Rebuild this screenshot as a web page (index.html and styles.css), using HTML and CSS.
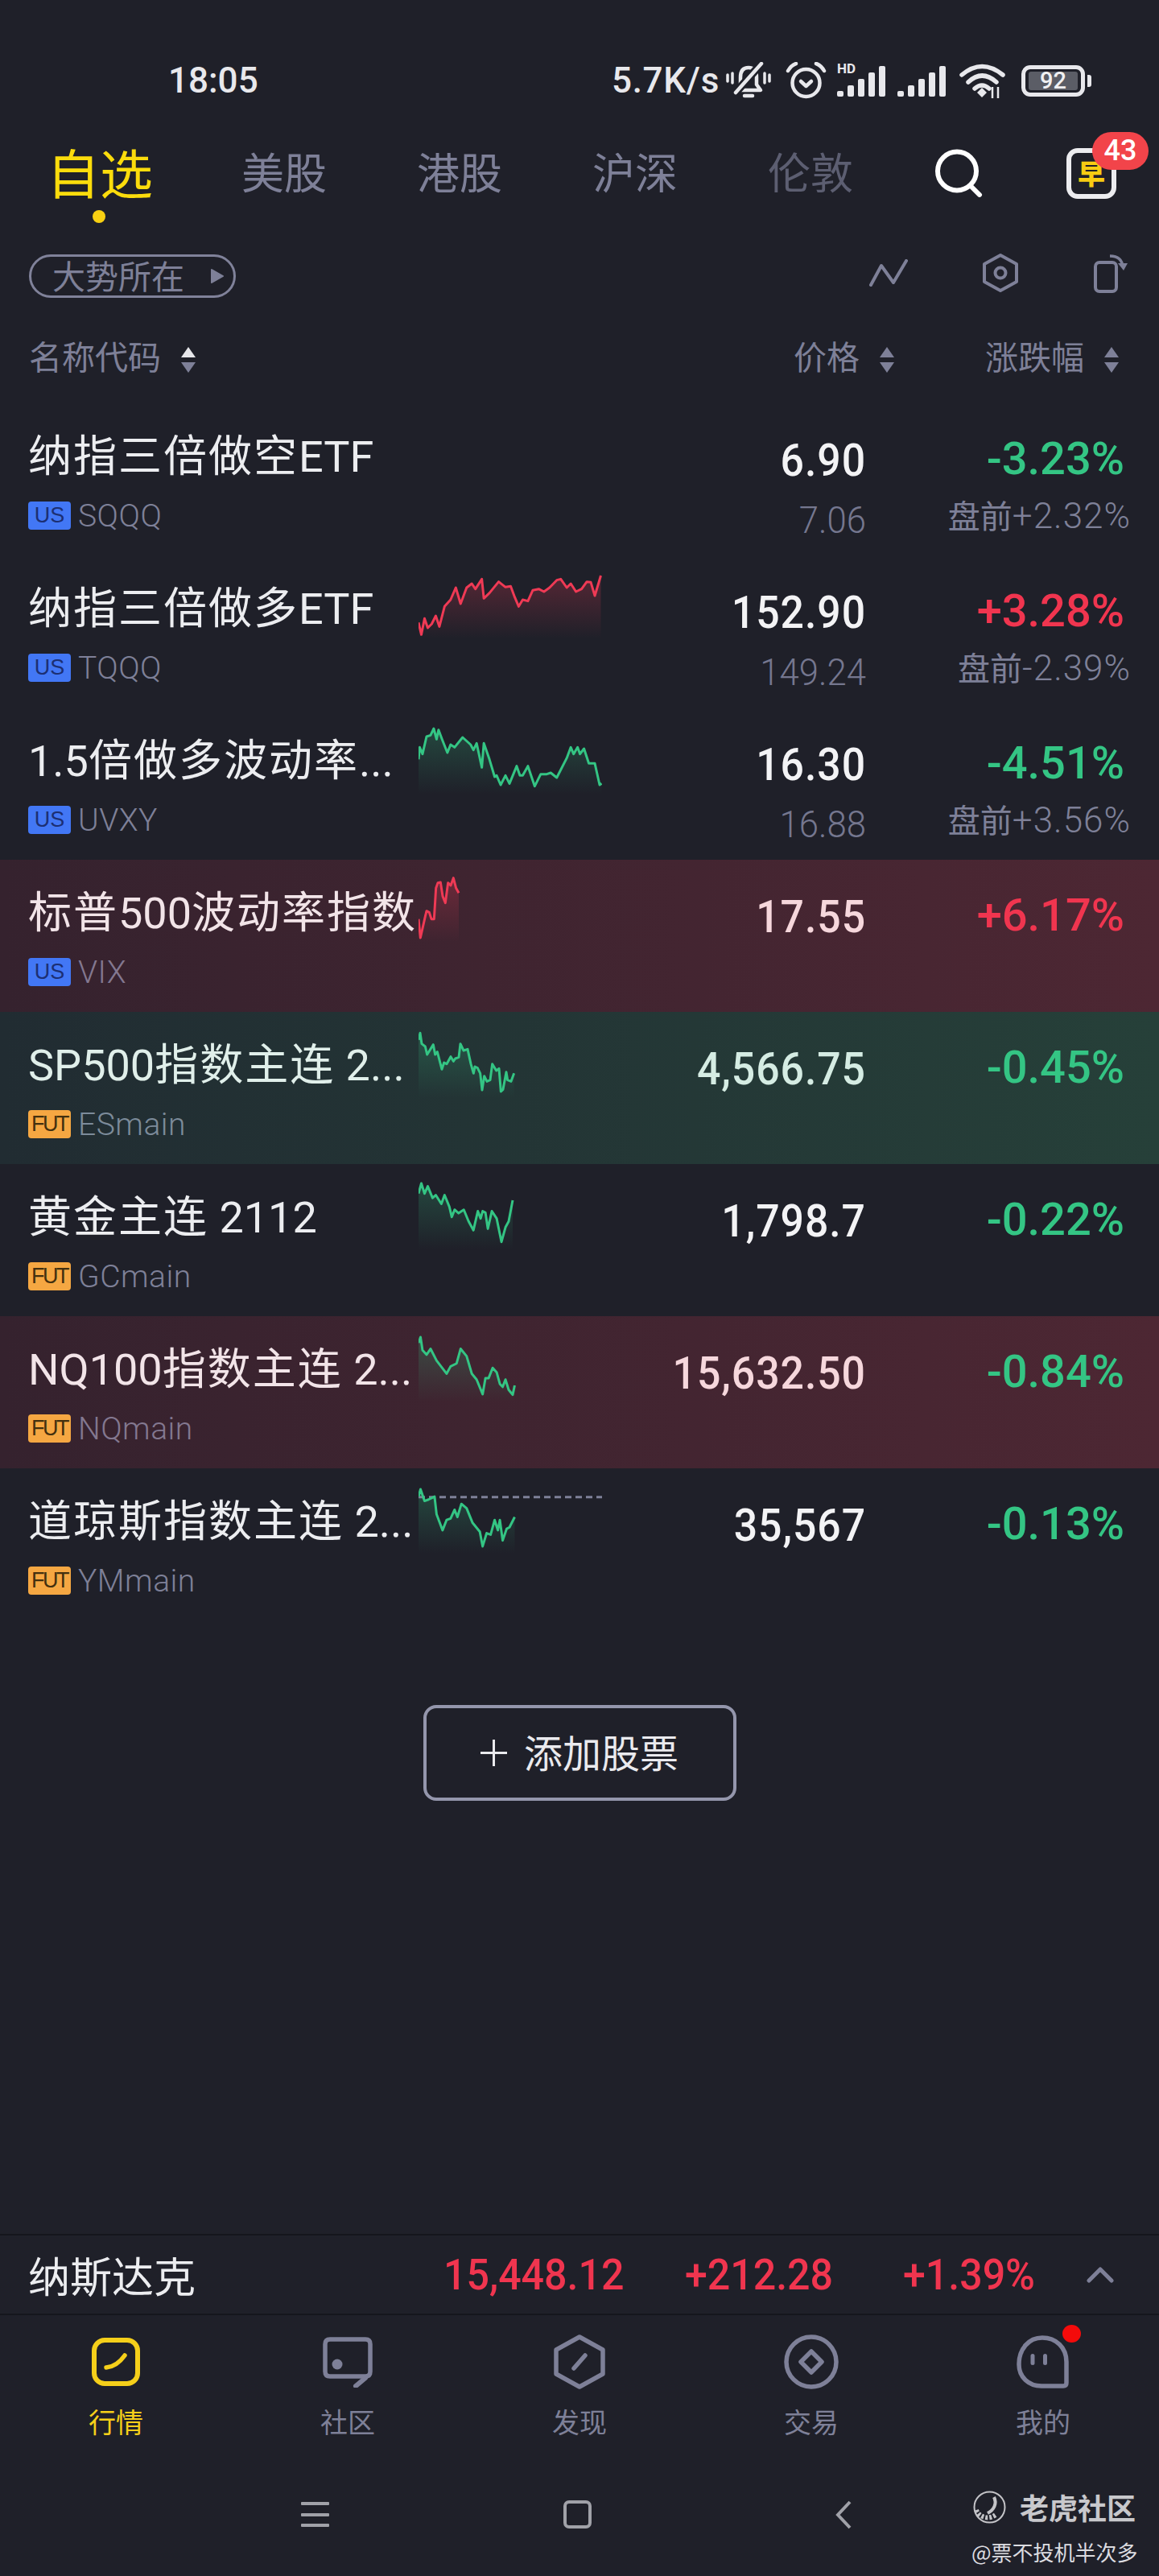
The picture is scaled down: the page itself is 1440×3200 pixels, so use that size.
FILE: index.html
```html
<!DOCTYPE html>
<html lang="zh-CN">
<head>
<meta charset="utf-8">
<title>自选</title>
<link rel="stylesheet" href="styles.css">
</head>
<body>
<div class="page">

  <header class="status">
    <span class="time">18:05</span>
    <div class="status-right">
      <span class="speed">5.7K/s</span>
      <svg class="ic-bell" width="56" height="46" viewBox="0 0 56 46"><g fill="none" stroke="#e8e8ec" stroke-width="4.500" stroke-linecap="round" stroke-linejoin="round"><path d="M13 35 L18 29 V19 Q18 7 28 7 Q38 7 38 19 V28 L43 35 Z"/><path d="M23 42 H33"/><path d="M12 38 L44 2" stroke="#1f2029" stroke-width="10"/><path d="M12 38 L44 2"/><path d="M8 14 V26 M2 16 V24 M48 14 V26 M54 16 V24" stroke-width="3.500"/></g></svg>
      <svg class="ic-alarm" width="51" height="46" viewBox="0 0 51 46"><g fill="none" stroke="#e8e8ec" stroke-width="4.500" stroke-linecap="round" stroke-linejoin="round"><circle cx="25.500" cy="26" r="17"/><path d="M19 24 L25.500 30 L32 24"/><path d="M3 11 Q7 4 13 2 M48 11 Q44 4 38 2"/></g></svg>
      <div class="ic-signal ic-hd"><span class="hd">HD</span><i class="b1"></i><i class="b2"></i><i class="b3"></i><i class="b4"></i><i class="b5"></i></div>
      <div class="ic-signal ic-sig2"><i class="b1"></i><i class="b2"></i><i class="b3"></i><i class="b4"></i><i class="b5"></i></div>
      <svg class="ic-wifi" width="58" height="44" viewBox="0 0 58 44"><g fill="none" stroke="#e8e8ec" stroke-width="5.500" stroke-linecap="round"><path d="M3 15 Q28 -6 54 15"/><path d="M11 24 Q28 8 46 24"/><path d="M19 32 Q28 24 37 32" /></g><path d="M22 37 L28 31 L34 37 L28 43 Z" fill="#e8e8ec"/><path d="M41 30 V44 M48 30 V44" stroke="#e8e8ec" stroke-width="2.500"/></svg>
      <div class="battery"><div class="batt-body"><span class="batt-fill">92</span></div><i class="batt-cap"></i></div>
    </div>
  </header>

  <nav class="tabs">
    <a class="tab tab-on">自选<i class="tab-dot"></i></a>
    <a class="tab">美股</a>
    <a class="tab">港股</a>
    <a class="tab">沪深</a>
    <a class="tab tab-fade">伦敦</a>
    <div class="tools">
      <svg width="60" height="60" viewBox="0 0 60 60"><circle cx="28" cy="27.500" r="24" fill="none" stroke="#fff" stroke-width="6"/><path d="M45 46 L56 57" stroke="#fff" stroke-width="6" stroke-linecap="round"/></svg>
      <div class="early"><span class="early-ch">早</span><span class="early-badge">43</span></div>
    </div>
  </nav>

  <div class="market">
    <div class="pill"><span class="pill-text">大势所在</span><svg width="18" height="20" viewBox="0 0 18 20"><path d="M2 2 L16 10 L2 18 Z" fill="#7e8098" stroke="#7e8098" stroke-width="2" stroke-linejoin="round"/></svg></div>
    <div class="market-tools">
      <svg width="48" height="34" viewBox="0 0 48 34"><path d="M2 32 L15 8 L30 29 L46 2" fill="none" stroke="#7e8098" stroke-width="4" stroke-linejoin="round" stroke-linecap="round"/></svg>
      <svg width="46" height="50" viewBox="0 0 46 50"><path d="M23 3 L43 14 V36 L23 47 L3 36 V14 Z" fill="none" stroke="#7e8098" stroke-width="4" stroke-linejoin="round"/><circle cx="23" cy="25" r="6.500" fill="none" stroke="#7e8098" stroke-width="4"/></svg>
      <svg width="44" height="50" viewBox="0 0 44 50"><rect x="3" y="12" width="26" height="36" rx="5" fill="none" stroke="#7e8098" stroke-width="4"/><path d="M21 4 Q36 4 37 18" fill="none" stroke="#7e8098" stroke-width="3.500"/><path d="M31 13 L38 22 L43 13 Z" fill="#7e8098"/></svg>
    </div>
  </div>

  <div class="cols">
    <div class="col">名称代码<span class="sort sort-up"></span></div>
    <div class="col">价格<span class="sort"></span></div>
    <div class="col">涨跌幅<span class="sort"></span></div>
  </div>

  <section class="list">

    <article class="row">
      <div class="name-cell"><div class="name">纳指三倍做空<span class="lat">ETF</span></div><div class="code"><span class="tag tag-us">US</span><span class="sym">SQQQ</span></div></div>
      <div class="spark"></div>
      <div class="price-cell"><div class="price">6.90</div><div class="close">7.06</div></div>
      <div class="chg-cell"><div class="chg down">-3.23%</div><div class="pre"><span class="pre-cn">盘前</span>+2.32%</div></div>
    </article>

    <article class="row">
      <div class="name-cell"><div class="name">纳指三倍做多<span class="lat">ETF</span></div><div class="code"><span class="tag tag-us">US</span><span class="sym">TQQQ</span></div></div>
      <div class="spark">
        <svg width="228" height="100" viewBox="1045 60 458 300" preserveAspectRatio="none">
          <defs><linearGradient id="gr" x1="0" y1="0" x2="0" y2="1"><stop offset="0" stop-color="#ef3a55" stop-opacity=".26"/><stop offset="1" stop-color="#ef3a55" stop-opacity="0"/></linearGradient></defs>
          <polygon class="area-red" points="1045,340 1045,280 1052,325 1060,265 1068,300 1078,285 1088,255 1097,295 1110,220 1125,195 1138,150 1150,210 1165,150 1178,135 1187,155 1203,118 1208,190 1222,170 1245,128 1262,148 1275,145 1285,185 1295,220 1305,195 1318,200 1330,160 1345,155 1358,165 1372,150 1390,122 1400,118 1415,150 1425,135 1438,165 1452,155 1465,128 1475,130 1485,180 1500,105 1500,340"/>
          <polyline class="line-red" points="1045,280 1052,325 1060,265 1068,300 1078,285 1088,255 1097,295 1110,220 1125,195 1138,150 1150,210 1165,150 1178,135 1187,155 1203,118 1208,190 1222,170 1245,128 1262,148 1275,145 1285,185 1295,220 1305,195 1318,200 1330,160 1345,155 1358,165 1372,150 1390,122 1400,118 1415,150 1425,135 1438,165 1452,155 1465,128 1475,130 1485,180 1500,105"/>
        </svg>
      </div>
      <div class="price-cell"><div class="price">152.90</div><div class="close">149.24</div></div>
      <div class="chg-cell"><div class="chg up">+3.28%</div><div class="pre"><span class="pre-cn">盘前</span>-2.39%</div></div>
    </article>

    <article class="row">
      <div class="name-cell"><div class="name"><span class="lat">1.5</span>倍做多波动率<span class="lat">...</span></div><div class="code"><span class="tag tag-us">US</span><span class="sym">UVXY</span></div></div>
      <div class="spark">
        <svg width="228" height="100" viewBox="1045 627 458 300" preserveAspectRatio="none">
          <defs><linearGradient id="gg" x1="0" y1="0" x2="0" y2="1"><stop offset="0" stop-color="#34c584" stop-opacity=".24"/><stop offset="1" stop-color="#34c584" stop-opacity="0"/></linearGradient></defs>
          <polygon class="area-green" points="1045,920 1045,790 1048,745 1055,770 1065,705 1075,700 1083,675 1090,715 1095,680 1105,720 1117,765 1125,735 1135,745 1155,708 1175,735 1182,755 1190,730 1203,820 1208,730 1222,790 1235,855 1240,850 1250,885 1262,850 1272,880 1290,815 1298,850 1305,850 1318,815 1335,890 1350,845 1365,845 1375,840 1390,858 1415,785 1425,745 1432,770 1442,745 1448,770 1458,750 1470,805 1485,805 1497,885 1502,880 1502,920"/>
          <polyline class="line-green" points="1045,790 1048,745 1055,770 1065,705 1075,700 1083,675 1090,715 1095,680 1105,720 1117,765 1125,735 1135,745 1155,708 1175,735 1182,755 1190,730 1203,820 1208,730 1222,790 1235,855 1240,850 1250,885 1262,850 1272,880 1290,815 1298,850 1305,850 1318,815 1335,890 1350,845 1365,845 1375,840 1390,858 1415,785 1425,745 1432,770 1442,745 1448,770 1458,750 1470,805 1485,805 1497,885 1502,880"/>
        </svg>
      </div>
      <div class="price-cell"><div class="price">16.30</div><div class="close">16.88</div></div>
      <div class="chg-cell"><div class="chg down">-4.51%</div><div class="pre"><span class="pre-cn">盘前</span>+3.56%</div></div>
    </article>

    <article class="row row-red">
      <div class="name-cell"><div class="name">标普<span class="lat">500</span>波动率指数</div><div class="code"><span class="tag tag-us">US</span><span class="sym">VIX</span></div></div>
      <div class="spark">
        <svg width="228" height="100" viewBox="60 24 684 300" preserveAspectRatio="none">
          <polygon class="area-red" points="60,300 60,215 67,285 85,205 90,185 100,190 108,215 118,215 125,100 132,80 142,78 150,130 160,155 170,80 180,90 190,62 200,100 210,118 210,300"/>
          <polyline class="line-red" points="60,215 67,285 85,205 90,185 100,190 108,215 118,215 125,100 132,80 142,78 150,130 160,155 170,80 180,90 190,62 200,100 210,118"/>
        </svg>
      </div>
      <div class="price-cell"><div class="price">17.55</div></div>
      <div class="chg-cell"><div class="chg up">+6.17%</div></div>
    </article>

    <article class="row row-green">
      <div class="name-cell"><div class="name"><span class="lat">SP500</span>指数主连<span class="lat"> 2...</span></div><div class="code"><span class="tag tag-fut">FUT</span><span class="sym">ESmain</span></div></div>
      <div class="spark">
        <svg width="228" height="100" viewBox="60 591 684 300" preserveAspectRatio="none">
          <polygon class="area-green" points="60,880 60,665 66,640 72,680 85,690 92,720 115,683 122,720 130,710 147,775 155,750 165,755 180,728 190,745 197,735 210,730 216,680 228,705 243,700 255,755 265,790 270,765 280,770 290,790 297,852 305,800 315,820 327,815 335,755 350,780 360,772 367,858 375,850 387,785 392,815 405,820 416,790 416,880"/>
          <polyline class="line-green" points="60,665 66,640 72,680 85,690 92,720 115,683 122,720 130,710 147,775 155,750 165,755 180,728 190,745 197,735 210,730 216,680 228,705 243,700 255,755 265,790 270,765 280,770 290,790 297,852 305,800 315,820 327,815 335,755 350,780 360,772 367,858 375,850 387,785 392,815 405,820 416,790"/>
        </svg>
      </div>
      <div class="price-cell"><div class="price">4,566.75</div></div>
      <div class="chg-cell"><div class="chg down">-0.45%</div></div>
    </article>

    <article class="row">
      <div class="name-cell"><div class="name">黄金主连<span class="lat"> 2112</span></div><div class="code"><span class="tag tag-fut">FUT</span><span class="sym">GCmain</span></div></div>
      <div class="spark">
        <svg width="228" height="100" viewBox="1045 71.500 458 275" preserveAspectRatio="none">
          <polygon class="area-green" points="1045,335 1045,145 1052,110 1060,145 1068,120 1080,160 1088,150 1095,165 1102,180 1110,150 1122,190 1128,225 1135,200 1145,212 1158,200 1170,240 1182,270 1193,205 1200,230 1205,205 1212,210 1218,265 1228,205 1240,230 1252,310 1262,260 1270,240 1280,168 1280,335"/>
          <polyline class="line-green" points="1045,145 1052,110 1060,145 1068,120 1080,160 1088,150 1095,165 1102,180 1110,150 1122,190 1128,225 1135,200 1145,212 1158,200 1170,240 1182,270 1193,205 1200,230 1205,205 1212,210 1218,265 1228,205 1240,230 1252,310 1262,260 1270,240 1280,168"/>
        </svg>
      </div>
      <div class="price-cell"><div class="price">1,798.7</div></div>
      <div class="chg-cell"><div class="chg down">-0.22%</div></div>
    </article>

    <article class="row row-red">
      <div class="name-cell"><div class="name"><span class="lat">NQ100</span>指数主连<span class="lat"> 2...</span></div><div class="code"><span class="tag tag-fut">FUT</span><span class="sym">NQmain</span></div></div>
      <div class="spark">
        <svg width="228" height="100" viewBox="1045 591 458 275" preserveAspectRatio="none">
          <polygon class="area-green" points="1045,855 1045,655 1050,635 1055,680 1065,695 1075,675 1090,715 1115,760 1125,735 1140,725 1150,675 1165,700 1178,760 1190,780 1205,830 1212,775 1220,775 1230,740 1240,755 1248,795 1255,805 1262,780 1270,815 1280,832 1285,800 1285,855"/>
          <polyline class="line-green" points="1045,655 1050,635 1055,680 1065,695 1075,675 1090,715 1115,760 1125,735 1140,725 1150,675 1165,700 1178,760 1190,780 1205,830 1212,775 1220,775 1230,740 1240,755 1248,795 1255,805 1262,780 1270,815 1280,832 1285,800"/>
        </svg>
      </div>
      <div class="price-cell"><div class="price">15,632.50</div></div>
      <div class="chg-cell"><div class="chg down">-0.84%</div></div>
    </article>

    <article class="row">
      <div class="name-cell"><div class="name">道琼斯指数主连<span class="lat"> 2...</span></div><div class="code"><span class="tag tag-fut">FUT</span><span class="sym">YMmain</span></div></div>
      <div class="spark">
        <svg width="228" height="100" viewBox="1045 1111 458 275" preserveAspectRatio="none">
          <polygon class="area-green" points="1045,1375 1045,1180 1050,1155 1060,1195 1070,1190 1085,1180 1090,1240 1105,1295 1115,1260 1125,1255 1135,1225 1142,1250 1152,1205 1165,1220 1180,1270 1198,1300 1205,1350 1215,1305 1225,1310 1235,1260 1243,1295 1248,1260 1255,1330 1265,1290 1272,1285 1285,1250 1285,1375"/>
          <line class="line-dash" x1="1045" y1="1182" x2="1503" y2="1182"/>
          <polyline class="line-green" points="1045,1180 1050,1155 1060,1195 1070,1190 1085,1180 1090,1240 1105,1295 1115,1260 1125,1255 1135,1225 1142,1250 1152,1205 1165,1220 1180,1270 1198,1300 1205,1350 1215,1305 1225,1310 1235,1260 1243,1295 1248,1260 1255,1330 1265,1290 1272,1285 1285,1250"/>
        </svg>
      </div>
      <div class="price-cell"><div class="price">35,567</div></div>
      <div class="chg-cell"><div class="chg down">-0.13%</div></div>
    </article>

  </section>

  <div class="add-wrap">
    <button class="add"><svg width="33" height="33" viewBox="0 0 33 33"><path d="M0 16.500 H33 M16.500 0 V33" stroke="#eaeaee" stroke-width="3"/></svg><span class="add-text">添加股票</span></button>
  </div>

  <footer class="foot">
    <div class="index-bar">
      <span class="ix-name">纳斯达克</span>
      <span class="ix-num">15,448.12</span>
      <span class="ix-num">+212.28</span>
      <span class="ix-num">+1.39%</span>
      <svg class="ix-arrow" width="34" height="20" viewBox="0 0 34 20"><path d="M3 17 L17 3 L31 17" fill="none" stroke="#7e8098" stroke-width="5" stroke-linecap="round" stroke-linejoin="round"/></svg>
    </div>

    <div class="tabbar">
      <a class="bar-item bar-on">
        <span class="bar-icon"><svg width="60" height="60" viewBox="0 0 60 60"><rect x="3" y="3" width="54" height="54" rx="13" fill="none" stroke="#f5cf1a" stroke-width="6"/><path d="M18 37 Q31 36 41 22" fill="none" stroke="#f5cf1a" stroke-width="5.500" stroke-linecap="round"/></svg></span>
        <span class="bar-label">行情</span>
      </a>
      <a class="bar-item">
        <span class="bar-icon"><svg width="62" height="63" viewBox="0 0 62 63"><path d="M9 3 H53 Q59 3 59 9 V43 Q59 49 53 49 H9 Q3 49 3 43 V9 Q3 3 9 3 Z" fill="none" stroke="#7e8098" stroke-width="5.500" stroke-linejoin="round"/><path d="M53 51 L41 61" stroke="#7e8098" stroke-width="6" stroke-linecap="round"/><circle cx="18" cy="34" r="6.500" fill="#7e8098"/></svg></span>
        <span class="bar-label">社区</span>
      </a>
      <a class="bar-item">
        <span class="bar-icon"><svg width="64" height="68" viewBox="0 0 64 68"><path d="M32 3 L61 19 V49 L32 65 L3 49 V19 Z" fill="none" stroke="#7e8098" stroke-width="5.500" stroke-linejoin="round"/><path d="M25 42 L39 26" stroke="#7e8098" stroke-width="5.500" stroke-linecap="round"/></svg></span>
        <span class="bar-label">发现</span>
      </a>
      <a class="bar-item">
        <span class="bar-icon"><svg width="68" height="68" viewBox="0 0 68 68"><circle cx="34" cy="34" r="31" fill="none" stroke="#7e8098" stroke-width="5.500"/><path d="M34 21 L47 34 L34 47 L21 34 Z" fill="none" stroke="#7e8098" stroke-width="5.500" stroke-linejoin="round"/></svg></span>
        <span class="bar-label">交易</span>
      </a>
      <a class="bar-item">
        <span class="bar-icon"><svg width="66" height="66" viewBox="0 0 66 66"><path d="M32 3 C15 3 3 17 3 36 C3 52 15 63 31 63 H58 Q62 63 62 59 V33 C62 15 49 3 32 3 Z" fill="none" stroke="#7e8098" stroke-width="5.500"/><rect x="17.500" y="23" width="5" height="14" rx="2.500" fill="#7e8098"/><rect x="33" y="23" width="5" height="14" rx="2.500" fill="#7e8098"/></svg><i class="bar-dot"></i></span>
        <span class="bar-label">我的</span>
      </a>
    </div>

    <div class="sysnav">
      <div class="sys-menu"><i></i><i></i><i></i></div>
      <div class="sys-home"></div>
      <svg class="sys-back" width="20" height="36" viewBox="0 0 20 36"><path d="M18 2 L3 18 L18 34" fill="none" stroke="#a0a1a8" stroke-width="4"/></svg>
    </div>
  </footer>

  <div class="mark">
    <div class="mark-top">
      <svg width="41" height="41" viewBox="0 0 41 41"><circle cx="20.500" cy="20.500" r="19" fill="none" stroke="#c4c4c8" stroke-width="2"/><path d="M26 8 C30 16 26 24 18 28" fill="none" stroke="#c4c4c8" stroke-width="4"/><path d="M4 24 C8 34 20 36 28 30" fill="none" stroke="#c4c4c8" stroke-width="6" stroke-dasharray="3 2"/></svg>
      <span>老虎社区</span>
    </div>
    <div class="mark-user">@票不投机半次多</div>
  </div>

</div>
</body>
</html>
```
FILE: styles.css
```css
* { box-sizing: border-box; margin: 0; padding: 0; }
html, body { background: #1f2029; }
body { width: 1440px; height: 3200px; overflow: hidden; font-family: "Noto Sans CJK SC", sans-serif; color: #ecedf0; }
i { display: block; font-style: normal; }
svg { display: block; flex: none; }

.page { position: relative; width: 1440px; height: 3200px; display: flex; flex-direction: column; }

/* status bar */
.status { display: flex; align-items: center; justify-content: space-between; height: 72px; margin-top: 64px; padding: 0 84px 0 209px; color: #e8e8ec; }
.time, .speed { font-family: Roboto, sans-serif; font-size: 44px; font-weight: 500; line-height: 72px; }
.status-right { display: flex; align-items: center; }
.speed { letter-spacing: .7px; }
.ic-bell { margin-left: 8px; }
.ic-alarm { margin-left: 18px; }
.ic-signal { position: relative; display: flex; align-items: flex-end; gap: 4.500px; width: 60px; height: 40px; }
.ic-hd { margin-left: 13px; }
.ic-sig2 { margin-left: 15px; }
.ic-signal i { width: 8.500px; background: #e8e8ec; border-radius: 2px; }
.b1 { height: 7px; } .b2 { height: 14px; } .b3 { height: 22px; } .b4 { height: 30px; } .b5 { height: 38px; }
.hd { position: absolute; left: 0; top: -4px; font-family: Roboto, sans-serif; font-size: 17px; font-weight: 700; line-height: 18px; color: #e8e8ec; }
.ic-wifi { margin-left: 17px; }
.battery { display: flex; align-items: center; gap: 3px; margin-left: 19px; }
.batt-body { width: 79px; height: 39px; border: 5px solid #e8e8ec; border-radius: 11px; padding: 3px 4px; }
.batt-fill { display: block; height: 100%; background: #5b5d66; border-radius: 3px; text-align: center; font-family: Roboto, sans-serif; font-size: 29px; font-weight: 500; line-height: 23px; color: #f0f0f2; }
.batt-cap { width: 5px; height: 15px; background: #e8e8ec; border-radius: 0 3px 3px 0; }

/* top tabs */
.tabs { display: flex; align-items: center; gap: 112px; height: 100px; margin-top: 26px; padding: 0 53px 0 58px; }
.tab { position: relative; flex: none; font-size: 53px; line-height: 100px; white-space: nowrap; color: #7e8098; }
.tab-on { font-size: 66px; margin-right: -2px; color: #fbdc0c; }
.tab-fade { color: #5c5e71; }
.tab-dot { position: absolute; left: 57px; top: 99px; width: 16px; height: 16px; border-radius: 50%; background: #f8d012; }
.tools { display: flex; align-items: center; gap: 104px; margin-left: -11px; margin-top: 6px; }
.early { position: relative; width: 62px; height: 63px; border: 6px solid #ececef; border-radius: 14px; display: flex; align-items: center; justify-content: center; }
.early-ch { font-size: 34px; font-weight: 900; line-height: 40px; color: #f8cc12; }
.early-badge { position: absolute; left: 26px; top: -26px; width: 70px; height: 47px; border-radius: 24px; background: #f2444a; font-family: Roboto, sans-serif; font-size: 36px; font-weight: 500; line-height: 47px; text-align: center; color: #fff; }

/* market row */
.market { display: flex; align-items: center; justify-content: space-between; height: 54px; margin-top: 54px; padding: 0 38px 0 36px; }
.pill { display: flex; align-items: center; justify-content: space-between; width: 257px; height: 54px; padding: 0 11px 0 26px; border: 3px solid #80829a; border-radius: 27px; font-size: 41px; line-height: 48px; color: #7e8098; }
.pill-text { margin-top: -4px; }
.market-tools { display: flex; align-items: center; margin-bottom: 8px; }
.market-tools svg:nth-child(1) { margin-right: 2px; }
.market-tools svg:nth-child(2) { margin-left: 90px; }
.market-tools svg:nth-child(3) { margin-left: 92px; }

/* column headers */
.cols { display: grid; grid-template-columns: 950px 238px 1fr; height: 54px; margin-top: 44px; padding-left: 36px; font-size: 41px; line-height: 54px; white-space: nowrap; color: #7e8098; }
.col { display: flex; align-items: center; }
.sort { position: relative; flex: none; width: 19px; height: 32px; margin: 12px 0 0 25px; }
.sort::before, .sort::after { content: ""; position: absolute; left: 0; border-left: 9.500px solid transparent; border-right: 9.500px solid transparent; }
.sort::before { top: 0; border-bottom: 13px solid #7e8098; }
.sort::after { bottom: 0; border-top: 13px solid #7e8098; }
.sort-up::before { border-bottom-color: #e6e6ea; }

/* rows */
.list { margin-top: 33px; }
.row { display: grid; grid-template-columns: 483px 228px 328px 1fr; height: 189px; padding: 0 35px 0 37px; }
.row-red { background: linear-gradient(90deg, #35222e, #4d2733); }
.row-green { background: linear-gradient(90deg, #212c32, #264039); }

.name { height: 64px; margin: 30px 0 0 -2px; font-family: "Noto Sans CJK SC", sans-serif; font-size: 54px; line-height: 64px; letter-spacing: 2px; white-space: pre; color: #ecedf0; }
.lat { font-family: Roboto, sans-serif; font-weight: 400; letter-spacing: 0; }
.code { display: flex; align-items: center; gap: 9px; height: 35px; margin-top: 28px; }
.tag { display: block; width: 53px; height: 35px; margin-left: -2px; border-radius: 4px; font-family: "Liberation Sans", sans-serif; font-size: 27px; line-height: 35px; text-align: center; }
.tag-us { background: #4277f5; color: #1c2f73; }
.tag-fut { background: #f5a742; color: #43300f; letter-spacing: -2.500px; }
.sym { font-family: Roboto, sans-serif; font-size: 39px; font-weight: 300; line-height: 38px; letter-spacing: .5px; color: #7e8098; }

.spark { padding-top: 10px; }
.area-red { fill: url(#gr); }
.area-green { fill: url(#gg); }
.line-red, .line-green, .line-dash { fill: none; stroke-width: 3; stroke-linejoin: round; vector-effect: non-scaling-stroke; }
.line-red { stroke: #ef3a55; }
.line-green { stroke: #34c584; }
.line-dash { stroke: #7e8098; stroke-dasharray: 8 5; }

.price-cell, .chg-cell { text-align: right; font-family: Roboto, "Noto Sans CJK SC", sans-serif; white-space: nowrap; }
.price { margin-top: 39px; font-size: 56px; font-weight: 500; line-height: 64px; letter-spacing: 1px; transform: scaleX(.925); transform-origin: 100% 50%; color: #f3f3f5; }
.close { margin-top: 14px; font-size: 46px; font-weight: 300; line-height: 56px; transform: scaleX(.95); transform-origin: 100% 50%; color: #75778f; }
.chg { margin-top: 37px; margin-right: 8px; font-size: 56px; font-weight: 500; line-height: 64px; }
.up { color: #f0354f; }
.down { color: #34c584; }
.pre { margin-top: 12px; font-size: 44px; font-weight: 300; line-height: 50px; letter-spacing: 1px; color: #7e8098; }
.pre-cn { font-family: "Noto Sans CJK SC", sans-serif; font-size: 40px; font-weight: 400; letter-spacing: 0; }

.row-red .name { color: #f2e4e8; }
.row-red .price { color: #f6d7dc; }
.row-red .sym { color: #837890; }
.row-green .name { color: #e0efea; }
.row-green .price { color: #d5ece3; }
.row-green .sym { color: #7c8b9a; }

/* add */
.add-wrap { display: flex; justify-content: center; margin-top: 105px; }
.add { display: flex; align-items: center; justify-content: center; gap: 21px; width: 389px; height: 119px; border: 4px solid #9496ac; border-radius: 16px; background: none; font-family: "Noto Sans CJK SC", sans-serif; font-size: 48px; line-height: 60px; color: #eaeaee; }
.add-text { margin-bottom: 6px; }

/* footer */
.foot { margin-top: auto; }
.index-bar { display: grid; grid-template-columns: 516px 300px 271px 1fr 90px; align-items: center; height: 101px; border-top: 2px solid #15161c; border-bottom: 2px solid #15161c; padding-left: 35px; }
.ix-name { font-size: 52px; line-height: 60px; color: #ecedf0; }
.ix-num { font-family: Roboto, sans-serif; font-size: 53px; font-weight: 500; line-height: 60px; white-space: nowrap; transform: scaleX(.945); transform-origin: 0 50%; color: #f0354f; }
.ix-arrow { margin-right: 56px; justify-self: end; }

.tabbar { display: grid; grid-template-columns: repeat(5, 288px); padding-top: 23px; }
.bar-item { display: flex; flex-direction: column; align-items: center; }
.bar-icon { position: relative; display: flex; align-items: center; justify-content: center; height: 70px; }
.bar-label { margin-top: 19px; font-size: 34px; line-height: 40px; color: #7e8098; }
.bar-on .bar-label { color: #f5cf1a; }
.bar-dot { position: absolute; left: 57px; top: -11px; width: 23px; height: 22px; border-radius: 50%; background: #f40b0b; }

.sysnav { display: flex; align-items: flex-start; padding: 78px 0 0 374px; height: 172px; }
.sys-menu { display: flex; flex-direction: column; gap: 9.500px; width: 35px; margin-top: 2px; }
.sys-menu i { height: 4px; background: #a0a1a8; border-radius: 1px; }
.sys-home { width: 35px; height: 35px; margin-left: 291px; border: 4px solid #a0a1a8; border-radius: 7px; }
.sys-back { margin-left: 303px; }

/* watermark */
.mark { position: absolute; left: 1207px; top: 3094px; }
.mark-top { display: flex; align-items: center; gap: 17px; height: 41px; margin-left: 2px; font-size: 36px; font-weight: 700; line-height: 41px; color: #c8c8cc; }
.mark-user { margin-top: 18px; font-size: 26px; line-height: 34px; white-space: nowrap; color: #dcdce0; }
```
